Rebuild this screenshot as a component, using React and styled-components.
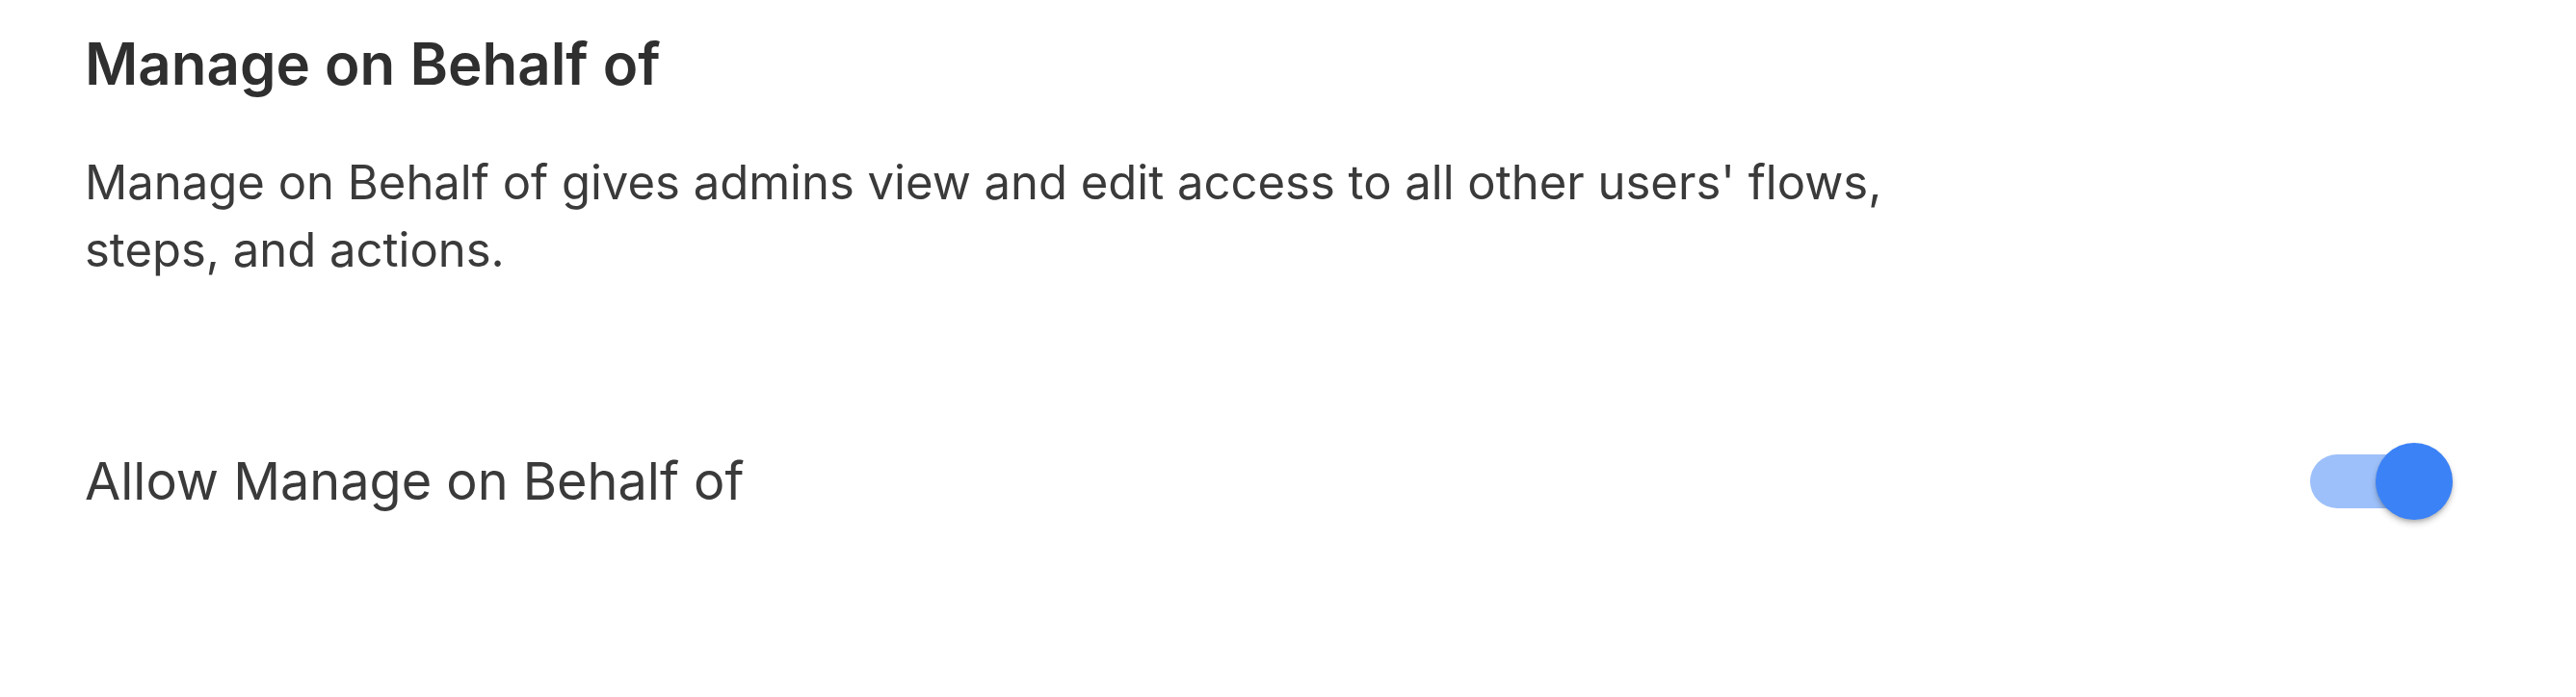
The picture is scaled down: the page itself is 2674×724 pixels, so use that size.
import styled, { createGlobalStyle } from "styled-components";

const GlobalStyle = createGlobalStyle`
  html, body {
    margin: 0;
    padding: 0;
    background: #fff;
  }
  body {
    font-family: Inter, "Noto Sans", sans-serif;
    color: #333;
  }
`;

const Page = styled.div`
  display: flex;
  flex-direction: column;
  padding: 30px 128px 0 88px;
  height: 724px;
  box-sizing: border-box;
`;

const Title = styled.h2`
  margin: 0;
  font-size: 60px;
  line-height: 72px;
  font-weight: 600;
  color: #2f2f2f;
`;

const Description = styled.p`
  margin: 53px 0 0;
  max-width: 2000px;
  font-size: 49px;
  line-height: 70px;
  font-weight: 400;
  color: #3a3a3a;
`;

const SettingRow = styled.div`
  display: flex;
  align-items: center;
  justify-content: space-between;
  height: 120px;
  margin-top: 145px;
`;

const Label = styled.span`
  font-size: 54px;
  line-height: 64px;
  color: #3a3a3a;
`;

const SwitchRoot = styled.button`
  position: relative;
  display: flex;
  align-items: center;
  width: 148px;
  height: 80px;
  padding: 0;
  border: 0;
  background: transparent;
  cursor: pointer;
`;

const Track = styled.span`
  display: block;
  width: 136px;
  height: 56px;
  border-radius: 28px;
  background: ${(p) => (p.$on ? "#9dc0fa" : "#c4c4c4")};
`;

const Thumb = styled.span`
  position: absolute;
  top: 0;
  left: ${(p) => (p.$on ? "68px" : "-12px")};
  width: 80px;
  height: 80px;
  border-radius: 50%;
  background: ${(p) => (p.$on ? "#3b82f6" : "#fafafa")};
  box-shadow: 0 4px 6px rgba(0, 0, 0, 0.2), 0 2px 3px rgba(0, 0, 0, 0.12);
`;

const Switch = ({ on }) => (
  <SwitchRoot role="switch" aria-checked={on}>
    <Track $on={on} />
    <Thumb $on={on} />
  </SwitchRoot>
);

const App = () => (
  <>
    <GlobalStyle />
    <Page>
      <Title>Manage on Behalf of</Title>
      <Description>
        Manage on Behalf of gives admins view and edit access to all other
        users' flows, steps, and actions.
      </Description>
      <SettingRow>
        <Label>Allow Manage on Behalf of</Label>
        <Switch on />
      </SettingRow>
    </Page>
  </>
);

export default App;
